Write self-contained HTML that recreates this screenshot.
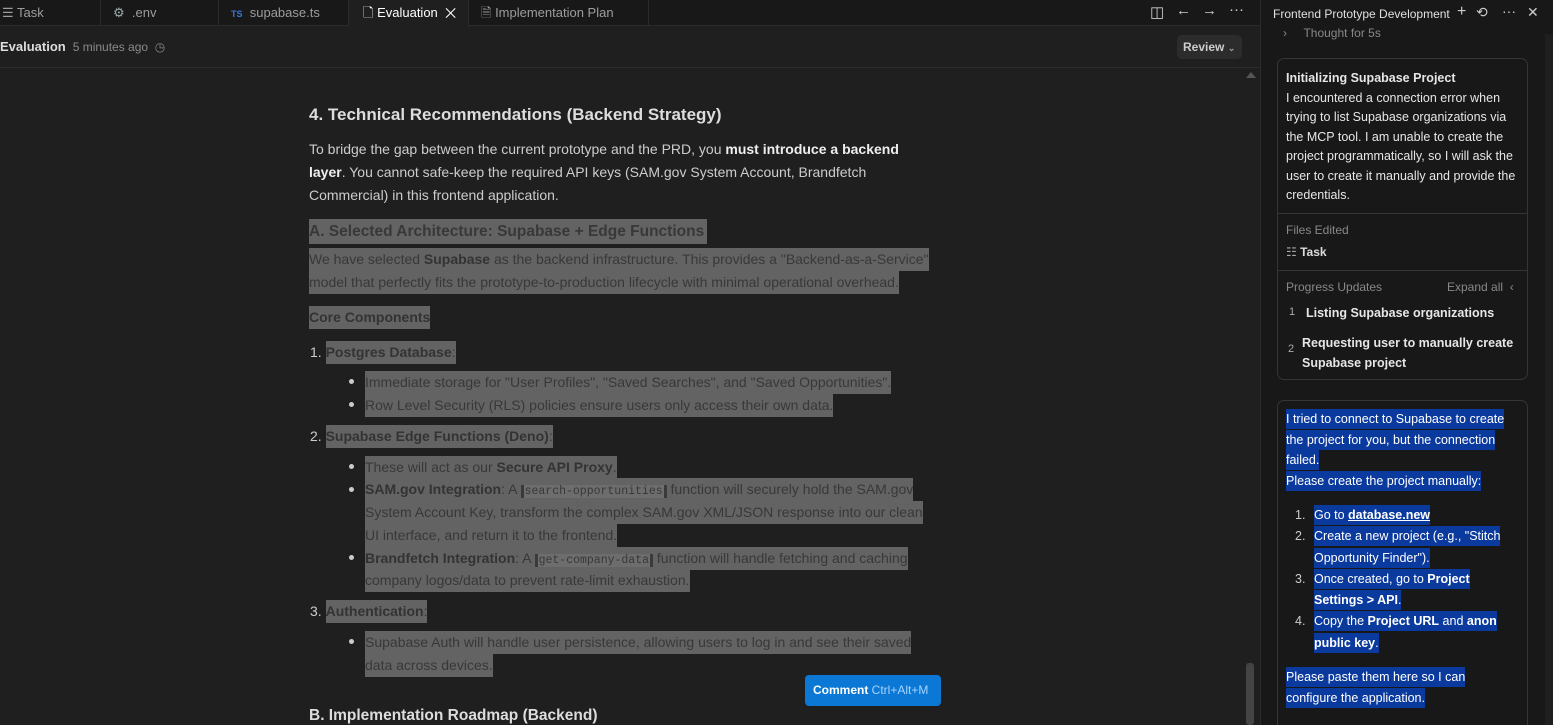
<!DOCTYPE html>
<html><head><meta charset="utf-8"><style>
*{margin:0;padding:0;box-sizing:border-box}
html,body{width:1553px;height:725px;overflow:hidden}
body{background:#1f1f1f;font-family:"Liberation Sans",sans-serif;color:#ccc;position:relative;font-size:14px}
.a{position:absolute;white-space:nowrap}
.tabs{position:absolute;left:0;top:0;width:1260px;height:26px;background:#181818;border-bottom:1px solid #2b2b2b}
.tab{position:absolute;top:0;height:26px;font-size:13px;line-height:25px;color:#9d9d9d;border-right:1px solid #2b2b2b}
.hdr{position:absolute;left:0;top:26px;width:1260px;height:42px;border-bottom:1px solid #2b2b2b}
.s{background:#636363;color:#383838;display:inline-block;line-height:23px;height:23px}
.s b{color:#333}
.ln{position:absolute;white-space:nowrap;font-size:14px;line-height:23px;color:#cccccc}
.dot{position:absolute;width:5px;height:5px;border-radius:50%;background:#ccc}
code{font-family:"Liberation Mono",monospace;font-size:11.5px;background:#6d6d6d;border-left:3px solid #3a3a3a;border-right:3px solid #3a3a3a;padding:0 1px}
.rp{position:absolute;left:1260px;top:0;width:293px;height:725px;background:#181818;border-left:1px solid #2b2b2b;overflow:hidden}
.card{position:absolute;left:16px;width:251px;border:1px solid #353535;border-radius:7px}
.w{color:#e6e6e6;font-size:13px;line-height:19.5px}
.bl{background:#0b3a9e;color:#fff;display:inline-block;line-height:20px}
.li{position:relative;padding-left:36px}
.li i{position:absolute;left:17px;font-style:normal;color:#ccc}
</style></head><body>
<div class="tabs">
 <div class="tab" style="left:0;width:101px;padding-left:2px">☰ Task</div>
 <div class="tab" style="left:101px;width:118px;padding-left:12px"><span style="color:#9aa">⚙</span>&nbsp; .env</div>
 <div class="tab" style="left:219px;width:130px;padding-left:12px"><span style="color:#3b78d8;font-size:9px;font-weight:bold">TS</span>&nbsp; supabase.ts</div>
 <div class="tab" style="left:349px;width:120px;padding-left:14px;background:#1f1f1f;color:#fff;height:27px">🗋 Evaluation &nbsp;✕</div>
 <div class="tab" style="left:469px;width:180px;padding-left:12px">🗎 Implementation Plan</div>
 <div class="a" style="left:1150px;top:3px;font-size:15px;color:#ccc">◫</div>
 <div class="a" style="left:1176px;top:2px;font-size:15px;color:#ccc">←</div>
 <div class="a" style="left:1202px;top:2px;font-size:15px;color:#ccc">→</div>
 <div class="a" style="left:1229px;top:1px;font-size:15px;color:#ccc">···</div>
</div>
<div class="hdr">
 <div class="a" style="left:0;top:13px;font-size:13px;font-weight:bold;color:#ddd">Evaluation <span style="font-weight:normal;font-size:12px;color:#8a8a8a">&nbsp;5 minutes ago &nbsp;◷</span></div>
 <div class="a" style="left:1177px;top:9px;width:65px;height:24px;background:#2c2c2c;border-radius:5px;font-size:12px;font-weight:bold;color:#ccc;line-height:24px;padding-left:6px">Review <span style="font-size:9px;color:#999">⌄</span></div>
</div>
<div class="a" style="left:1246px;top:72px;width:0;height:0;border-left:5px solid transparent;border-right:5px solid transparent;border-bottom:6px solid #555"></div>
<div class="a" style="left:1246px;top:663px;width:8px;height:62px;background:#444;border-radius:3px"></div>

<div class="a" style="left:309px;top:105px;font-size:17px;font-weight:bold;color:#ddd">4. Technical Recommendations (Backend Strategy)</div>
<div class="ln" style="left:309px;top:138px">To bridge the gap between the current prototype and the PRD, you <b style="color:#eee">must introduce a backend</b></div>
<div class="ln" style="left:309px;top:161px"><b style="color:#eee">layer</b>. You cannot safe-keep the required API keys (SAM.gov System Account, Brandfetch</div>
<div class="ln" style="left:309px;top:184px">Commercial) in this frontend application.</div>
<div class="ln" style="left:309px;top:219px"><span class="s" style="font-size:15.5px;font-weight:bold;line-height:25px;height:25px;padding-right:3px">A. Selected Architecture: Supabase + Edge Functions</span></div>
<div class="ln" style="left:309px;top:248px"><span class="s">We have selected <b>Supabase</b> as the backend infrastructure. This provides a "Backend-as-a-Service"</span></div>
<div class="ln" style="left:309px;top:271px"><span class="s">model that perfectly fits the prototype-to-production lifecycle with minimal operational overhead.</span></div>
<div class="ln" style="left:309px;top:306px"><span class="s" style="font-weight:bold;color:#333">Core Components</span></div>
<div class="ln" style="left:310px;top:341px">1. <span class="s"><b>Postgres Database</b>:</span></div>
<div class="dot" style="left:349px;top:379px"></div>
<div class="ln" style="left:365px;top:371px"><span class="s">Immediate storage for "User Profiles", "Saved Searches", and "Saved Opportunities".</span></div>
<div class="dot" style="left:349px;top:402px"></div>
<div class="ln" style="left:365px;top:394px"><span class="s">Row Level Security (RLS) policies ensure users only access their own data.</span></div>
<div class="ln" style="left:310px;top:425px">2. <span class="s"><b>Supabase Edge Functions (Deno)</b>:</span></div>
<div class="dot" style="left:349px;top:464px"></div>
<div class="ln" style="left:365px;top:456px"><span class="s">These will act as our <b>Secure API Proxy</b>.</span></div>
<div class="dot" style="left:349px;top:487px"></div>
<div class="ln" style="left:365px;top:478px"><span class="s"><b>SAM.gov Integration</b>: A <code>search-opportunities</code> function will securely hold the SAM.gov</span></div>
<div class="ln" style="left:365px;top:501px"><span class="s">System Account Key, transform the complex SAM.gov XML/JSON response into our clean</span></div>
<div class="ln" style="left:365px;top:524px"><span class="s">UI interface, and return it to the frontend.</span></div>
<div class="dot" style="left:349px;top:555px"></div>
<div class="ln" style="left:365px;top:547px"><span class="s"><b>Brandfetch Integration</b>: A <code>get-company-data</code> function will handle fetching and caching</span></div>
<div class="ln" style="left:365px;top:569px"><span class="s">company logos/data to prevent rate-limit exhaustion.</span></div>
<div class="ln" style="left:310px;top:600px">3. <span class="s"><b>Authentication</b>:</span></div>
<div class="dot" style="left:349px;top:639px"></div>
<div class="ln" style="left:365px;top:631px"><span class="s">Supabase Auth will handle user persistence, allowing users to log in and see their saved</span></div>
<div class="ln" style="left:365px;top:654px"><span class="s">data across devices.</span></div>
<div class="a" style="left:805px;top:675px;width:136px;height:31px;background:#0a78d4;border-radius:4px;color:#fff;font-size:12px;font-weight:bold;line-height:31px;padding-left:8px">Comment <span style="color:#a8d3ff;font-weight:normal">Ctrl+Alt+M</span></div>
<div class="a" style="left:309px;top:707px;font-size:15.5px;font-weight:bold;color:#ddd">B. Implementation Roadmap (Backend)</div>

<div class="rp">
 <div class="a" style="left:12px;top:7px;font-size:12px;color:#e0e0e0">Frontend Prototype Development</div>
 <div class="a" style="left:196px;top:3px;font-size:16px;color:#ccc">+</div>
 <div class="a" style="left:215px;top:4px;font-size:14px;color:#ccc">⟲</div>
 <div class="a" style="left:241px;top:3px;font-size:14px;color:#ccc">···</div>
 <div class="a" style="left:266px;top:4px;font-size:14px;color:#ccc">✕</div>
 <div class="a" style="left:22px;top:26px;font-size:12px;color:#888">›&nbsp;&nbsp;&nbsp;&nbsp; Thought for 5s</div>
 <div class="a" style="left:284px;top:34px;width:9px;height:691px;background:#1f1f1f"></div>
 <div class="card" style="top:58px;height:322px">
  <div class="w" style="padding:10px 8px 0;font-size:12.5px"><b>Initializing Supabase Project</b><br>I encountered a connection error when trying to list Supabase organizations via the MCP tool. I am unable to create the project programmatically, so I will ask the user to create it manually and provide the credentials.</div>
  <div style="position:absolute;top:154px;left:0;right:0;border-top:1px solid #353535"></div>
  <div class="a" style="left:8px;top:164px;font-size:12px;color:#888">Files Edited</div>
  <div class="a" style="left:8px;top:186px;font-size:12px;color:#ddd;font-weight:bold"><span style="color:#aaa;font-weight:normal">☷</span> Task</div>
  <div style="position:absolute;top:211px;left:0;right:0;border-top:1px solid #353535"></div>
  <div class="a" style="left:8px;top:221px;font-size:12px;color:#888">Progress Updates</div>
  <div class="a" style="left:169px;top:221px;font-size:12px;color:#888">Expand all &nbsp;‹</div>
  <div class="a" style="left:11px;top:247px;font-size:11px;color:#aaa">1</div>
  <div class="a" style="left:28px;top:247px;font-size:12.5px;color:#e6e6e6;font-weight:bold">Listing Supabase organizations</div>
  <div class="a" style="left:10px;top:284px;font-size:11px;color:#aaa">2</div>
  <div class="a" style="left:24px;top:274px;font-size:12.5px;color:#e6e6e6;font-weight:bold;line-height:20px">Requesting user to manually create<br>Supabase project</div>
 </div>
 <div class="card" style="top:400px;height:340px">
  <div class="w" style="position:absolute;left:8px;top:8px;font-size:12.5px;line-height:19.5px">
   <span class="bl">I tried to connect to Supabase to create</span><br><span class="bl">the project for you, but the connection</span><br><span class="bl">failed.</span><br><span class="bl">Please create the project manually:</span>
  </div>
  <div class="w" style="position:absolute;left:0;top:104px;width:250px;font-size:12.5px;line-height:21.3px">
   <div class="li"><i>1.</i><span class="bl">Go to <b><u>database.new</u></b></span></div>
   <div class="li"><i>2.</i><span class="bl">Create a new project (e.g., "Stitch</span><br><span class="bl">Opportunity Finder").</span></div>
   <div class="li"><i>3.</i><span class="bl">Once created, go to <b>Project</b></span><br><span class="bl"><b>Settings &gt; API</b>.</span></div>
   <div class="li"><i>4.</i><span class="bl">Copy the <b>Project URL</b> and <b>anon</b></span><br><span class="bl"><b>public key</b>.</span></div>
  </div>
  <div class="w" style="position:absolute;left:8px;top:266px;font-size:12.5px;line-height:19.5px">
   <span class="bl">Please paste them here so I can</span><br><span class="bl">configure the application.</span>
  </div>
 </div>
</div>
</body></html>
